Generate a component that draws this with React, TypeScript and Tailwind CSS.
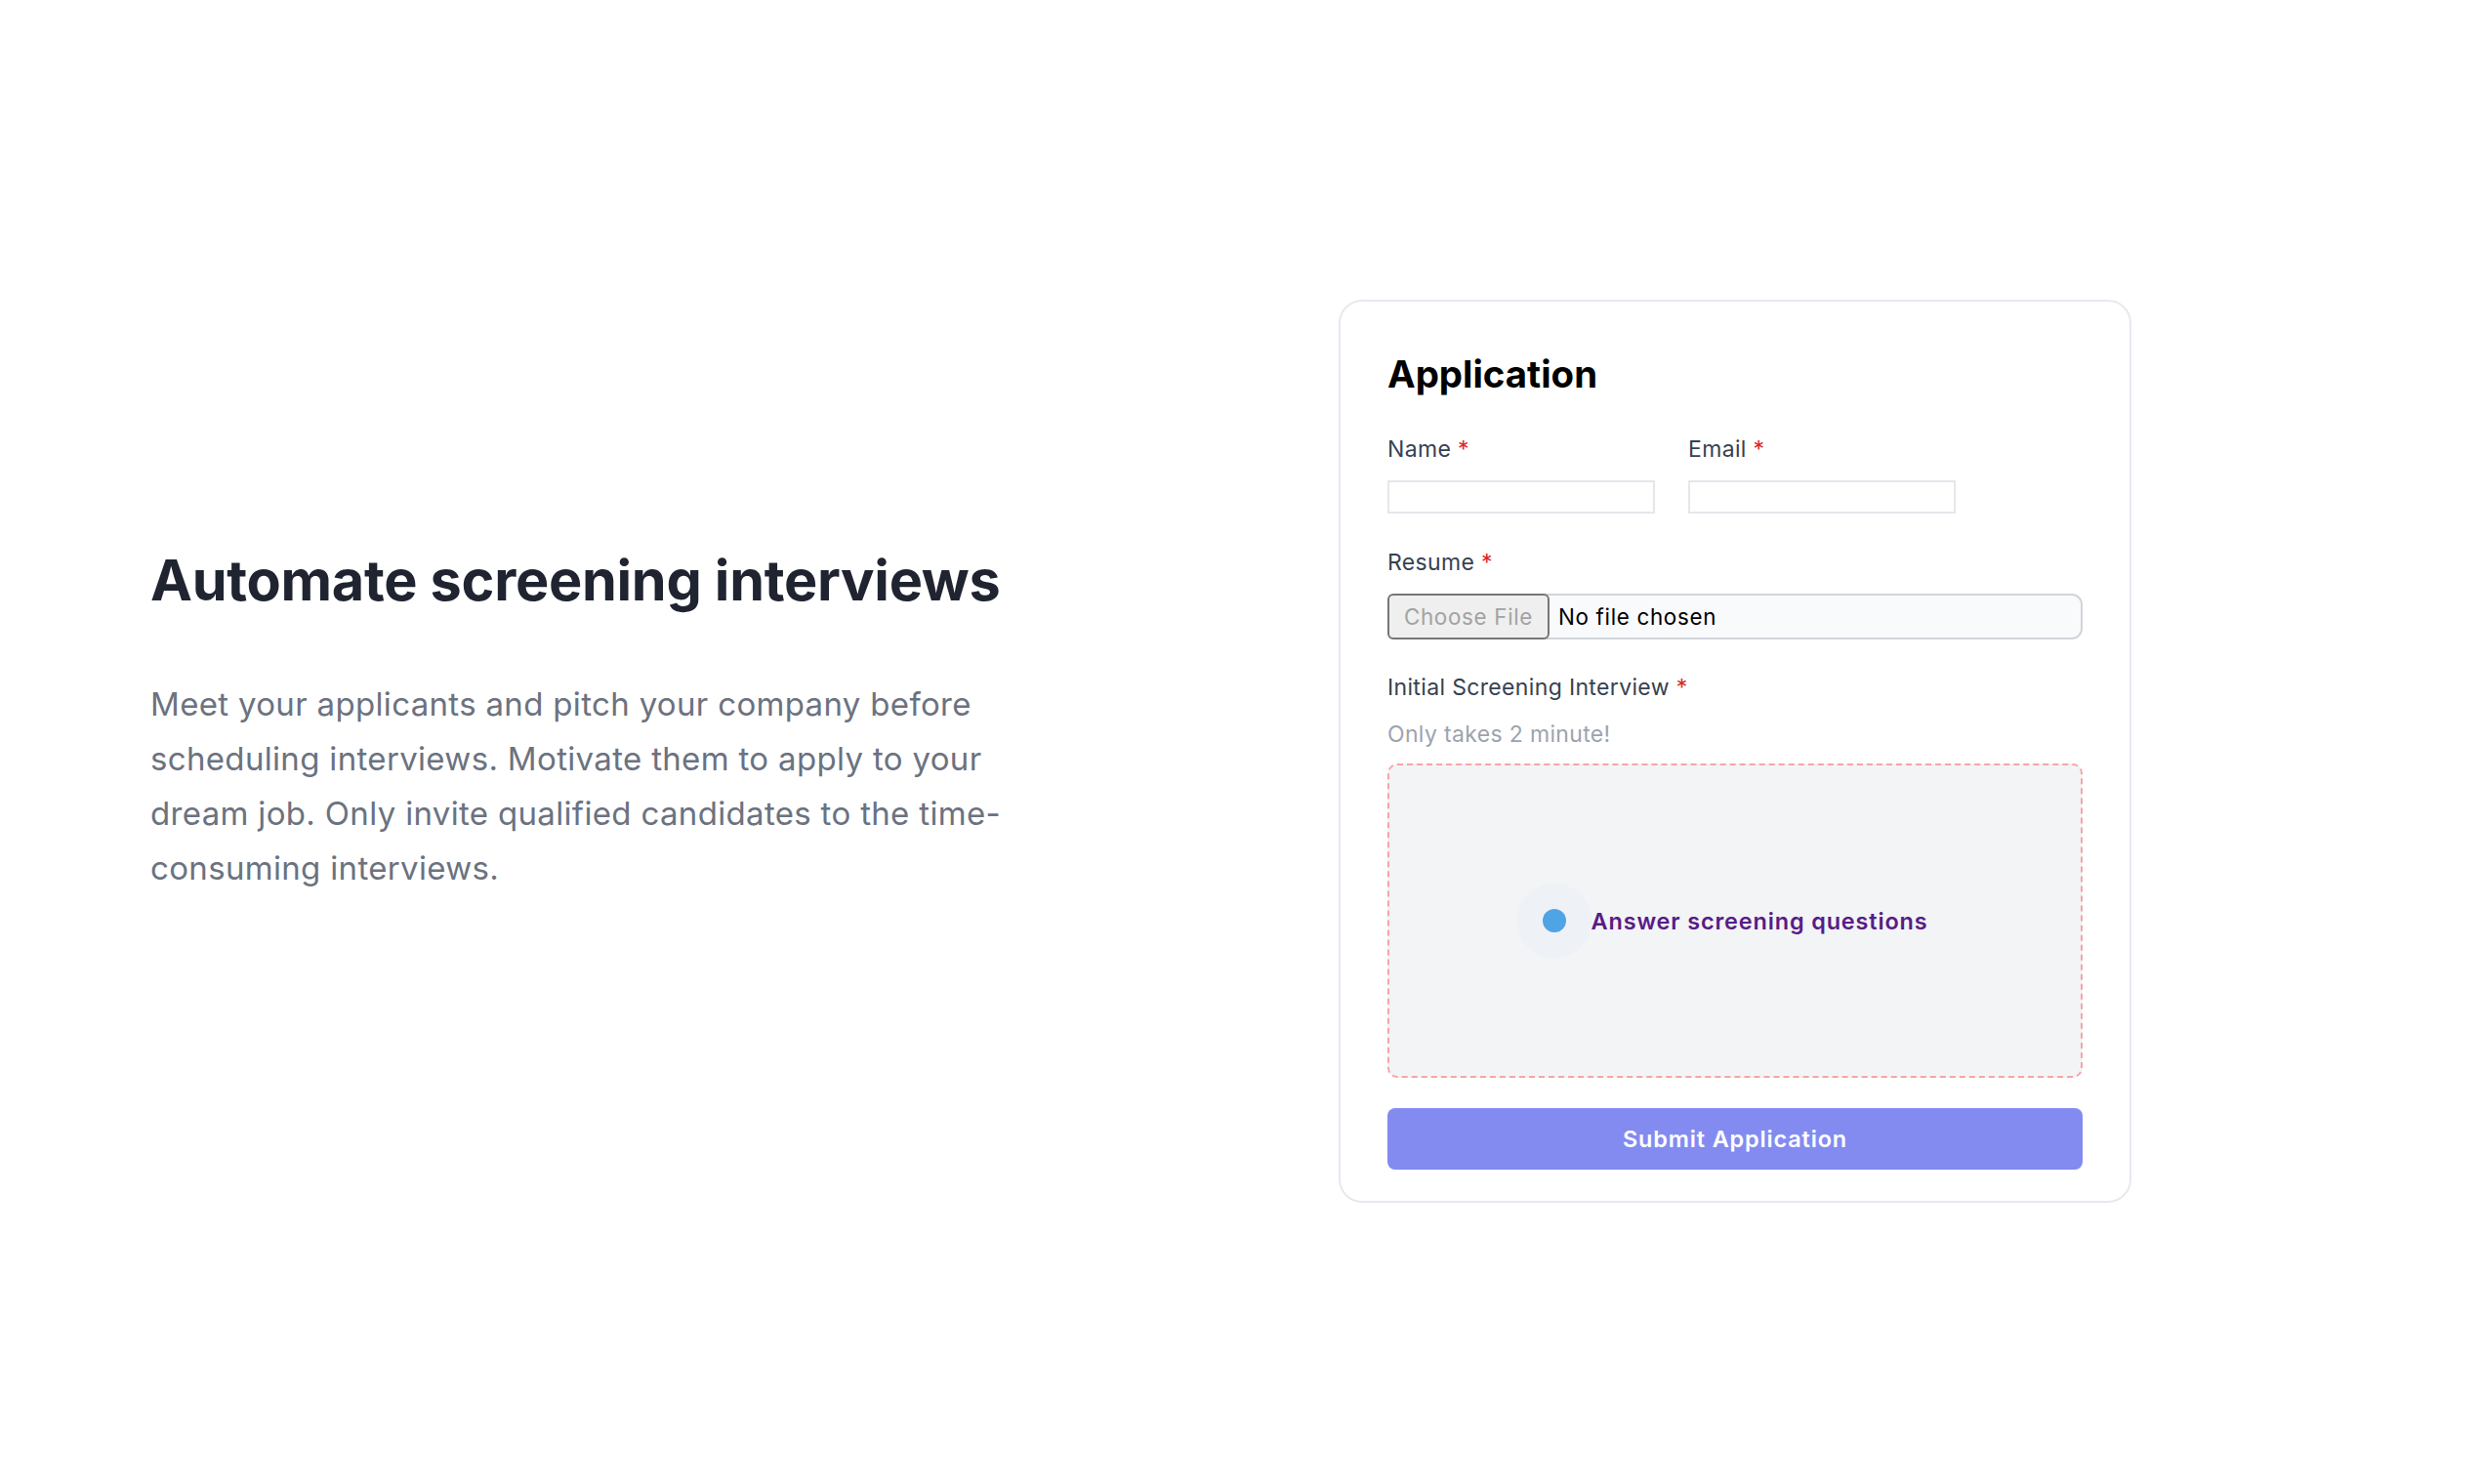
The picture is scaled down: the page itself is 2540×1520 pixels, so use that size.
export default function App() {
  return (
    <div className="min-h-screen w-full bg-white font-['Inter',sans-serif]">
      <div className="flex items-start pl-[154px] pt-[307px]">
        {/* Intro copy */}
        <div className="w-[900px] pt-[255px]">
          <h2 className="text-[57.6px] font-bold leading-[64px] tracking-[-0.005em] text-[#1f2430]">
            Automate screening interviews
          </h2>
          <p className="mt-[67px] text-[33px] leading-[56px] tracking-[0.01em] text-[#6b7280]">
            Meet your applicants and pitch your company before
            <br />
            scheduling interviews. Motivate them to apply to your
            <br />
            dream job. Only invite qualified candidates to the time-
            <br />
            consuming interviews.
          </p>
        </div>

        {/* Application card */}
        <div className="ml-[317px] w-[812px] rounded-[24px] border-2 border-[#e5e9f0] bg-white px-[48px] pb-[32px] pt-[49px]">
          <h3 className="text-[38.4px] font-bold leading-[51.2px] text-black">Application</h3>

          <div className="mt-[35px] flex gap-[34px]">
            <div>
              <label className="block text-[23px] leading-[32px] tracking-[0.015em] text-[#374151]">
                Name <span className="text-[#dc2626]">*</span>
              </label>
              <div className="mt-[16px] h-[34px] w-[274px] border-2 border-[#e5e7eb]" />
            </div>
            <div>
              <label className="block text-[23px] leading-[32px] tracking-[0.015em] text-[#374151]">
                Email <span className="text-[#dc2626]">*</span>
              </label>
              <div className="mt-[16px] h-[34px] w-[274px] border-2 border-[#e5e7eb]" />
            </div>
          </div>

          <label className="mt-[34px] block text-[23px] leading-[32px] tracking-[0.015em] text-[#374151]">
            Resume <span className="text-[#dc2626]">*</span>
          </label>
          <div className="mt-[16px] flex h-[47px] items-center rounded-[11px] border-2 border-[#d1d5db] bg-[#f9fafb]">
            <div className="-my-[2px] -ml-[2px] flex h-[calc(100%+4px)] w-[166px] items-center justify-center rounded-[6px] border-2 border-[#767676] bg-[#efefef] text-[22.4px] tracking-[0.03em] text-[#a3a3a3]">
              Choose File
            </div>
            <span className="ml-[9px] text-[22.4px] tracking-[0.03em] text-black">No file chosen</span>
          </div>

          <label className="mt-[33px] block text-[23px] leading-[32px] tracking-[0.015em] text-[#374151]">
            Initial Screening Interview <span className="text-[#dc2626]">*</span>
          </label>
          <p className="mt-[16px] text-[23px] leading-[32px] tracking-[0.015em] text-[#9ca3af]">Only takes 2 minute!</p>

          <div className="mt-[14px] flex h-[322px] items-center justify-center rounded-[10px] border-2 border-dashed border-[#f5a5a5] bg-[#f3f4f6]">
            <div className="flex items-center gap-[26px]">
              <div className="relative h-[24px] w-[24px]">
                <div className="absolute left-1/2 top-1/2 h-[77px] w-[77px] -translate-x-1/2 -translate-y-1/2 rounded-full bg-[#eef2f7]" />
                <div className="relative h-[24px] w-[24px] rounded-full bg-[#4ea4e4]" />
              </div>
              <span className="text-[23.5px] font-semibold tracking-[0.035em] text-[#581c87]">
                Answer screening questions
              </span>
            </div>
          </div>

          <button className="mt-[31px] flex h-[63px] w-full items-center justify-center rounded-[8px] bg-[#838bf1] text-[23.5px] font-semibold tracking-[0.035em] text-white">
            Submit Application
          </button>
        </div>
      </div>
    </div>
  );
}
